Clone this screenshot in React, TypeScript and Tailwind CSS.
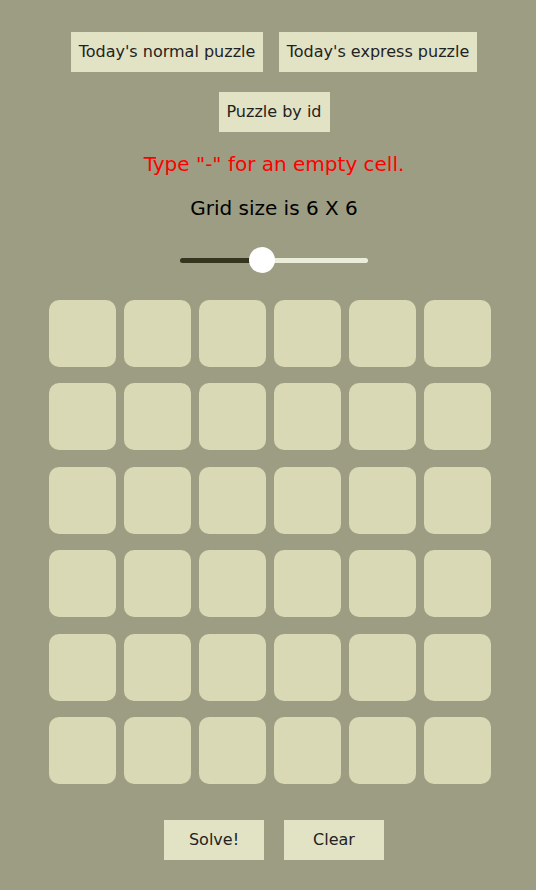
const cells = Array.from({ length: 36 }, (_, i) => i)

const App = () => {
  return (
    <div className="w-[536px] min-h-[890px] bg-[#9d9d83] pl-3 flex flex-col items-center font-['DejaVu_Sans',sans-serif] text-[#222]">
      <div className="flex gap-4 mt-8">
        <button className="h-10 w-[192px] bg-[#e2e2c5] text-base">Today's normal puzzle</button>
        <button className="h-10 w-[198px] bg-[#e2e2c5] text-base">Today's express puzzle</button>
      </div>
      <button className="h-10 w-[111px] mt-5 bg-[#e2e2c5] text-base">Puzzle by id</button>
      <p className="mt-5 text-[20px] leading-6 text-[#ff0000]">Type "-" for an empty cell.</p>
      <p className="mt-5 text-[20px] leading-6 text-black">Grid size is 6 X 6</p>
      {/* slider */}
      <div className="relative w-[188px] h-[26px] mt-[27px] flex items-center">
        <div className="h-[5px] w-[82px] bg-[#34341f] rounded-l-full" />
        <div className="h-[5px] flex-1 bg-[#ecedd9] rounded-r-full" />
        <div className="absolute left-[69px] top-0 w-[26px] h-[26px] rounded-full bg-white" />
      </div>
      <div className="grid grid-cols-[repeat(6,67px)] gap-x-2 gap-y-[16.4px] mt-[27px] mr-2">
        {cells.map((c) => (
          <div key={c} className="w-[67px] h-[67px] rounded-[10px] bg-[#d9d9b6]" />
        ))}
      </div>
      <div className="flex gap-5 mt-9">
        <button className="h-10 w-[100px] bg-[#e2e2c5] text-base">Solve!</button>
        <button className="h-10 w-[100px] bg-[#e2e2c5] text-base">Clear</button>
      </div>
    </div>
  )
}

export default App
